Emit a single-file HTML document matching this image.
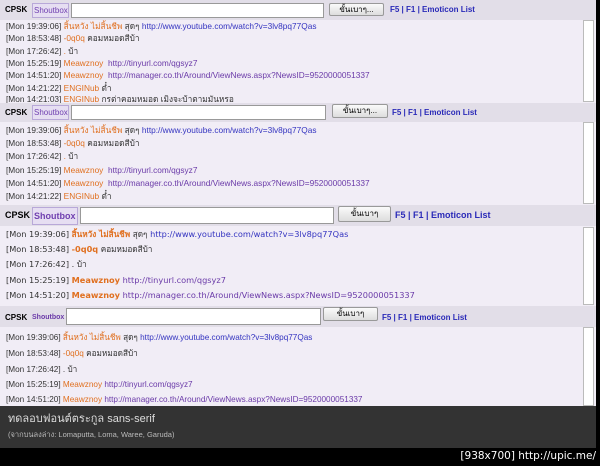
<!DOCTYPE html>
<html><head><meta charset="utf-8"><style>
*{margin:0;padding:0;box-sizing:border-box}
body{width:600px;height:466px;background:#000;position:relative;overflow:hidden;font-family:"Liberation Sans","Noto Sans CJK SC",sans-serif}
.sec{position:absolute;left:0;width:596px;background:#f1edf6}
.hd{position:absolute;left:0;width:596px;background:#e2dee8;font-size:9px;color:#000}
.hd span{position:absolute;white-space:nowrap;line-height:1}
.sb{position:absolute;border:1px solid #b8a8d8;background:#e6def2;color:#7040b0;font-weight:bold}
.in{position:absolute;background:#fff;border:1px solid #999}
.bt{position:absolute;background:linear-gradient(#fafafa,#ddd);border:1px solid #999;border-radius:2px;font-size:8px;text-align:center}
.lk{color:#2a2ab8;font-weight:bold}
.row{position:absolute;left:6px;white-space:nowrap;color:#333;line-height:10px;height:10px}
.n{color:#e07020}
.u{color:#3434c0}
.u2{color:#6a3aa8}
.scr{position:absolute;left:583px;width:11px;background:#fff;border:1px solid #bbb}
</style></head><body>

<!-- section 1 -->
<div class="sec" style="top:20px;height:84px"></div>
<div class="hd" style="top:0;height:20px;font-size:8px">
<span style="left:5px;top:6px;font-weight:bold">CPSK</span>
<span class="sb" style="left:32px;top:3px;height:15px;width:37px;padding:3px 1px;font-weight:normal">Shoutbox</span>
<span class="in" style="left:71px;top:3px;width:253px;height:15px"></span>
<span class="bt" style="left:329px;top:3px;width:55px;height:13px;line-height:11px">ขั้นเบาๆ...</span>
<span class="lk" style="left:390px;top:6px">F5 | F1 | Emoticon List</span>
</div>
<div style="font-size:8.3px">
<div class="row" style="top:21px">[Mon 19:39:06] <span class="n">สิ้นหวัง ไม่สิ้นชีพ</span> สุดๆ <span class="u">http://www.youtube.com/watch?v=3lv8pq77Qas</span></div>
<div class="row" style="top:33px">[Mon 18:53:48] <span class="n">-0q0q</span> คอมหมอดสีบ้า</div>
<div class="row" style="top:46px">[Mon 17:26:42] <span class="n">.</span> บ้า</div>
<div class="row" style="top:58px">[Mon 15:25:19] <span class="n">Meawznoy</span> &nbsp;<span class="u2">http://tinyurl.com/qgsyz7</span></div>
<div class="row" style="top:70px">[Mon 14:51:20] <span class="n">Meawznoy</span> &nbsp;<span class="u2">http://manager.co.th/Around/ViewNews.aspx?NewsID=9520000051337</span></div>
<div class="row" style="top:83px">[Mon 14:21:22] <span class="n">ENGINub</span> ต๋ำ</div>
<div class="row" style="top:94px">[Mon 14:21:03] <span class="n">ENGINub</span> กรต่าคอมหมอด เมิงจะบ้าตามมันหรอ</div>
</div>
<div class="scr" style="top:20px;height:82px"></div>

<!-- section 2 -->
<div class="sec" style="top:121px;height:84px"></div>
<div class="hd" style="top:103px;height:19px;font-size:8px">
<span style="left:5px;top:6px;font-weight:bold">CPSK</span>
<span class="sb" style="left:32px;top:2px;height:15px;width:37px;padding:3px 1px;font-weight:normal">Shoutbox</span>
<span class="in" style="left:71px;top:2px;width:255px;height:15px"></span>
<span class="bt" style="left:332px;top:1px;width:56px;height:14px;line-height:12px">ขั้นเบาๆ...</span>
<span class="lk" style="left:392px;top:6px">F5 | F1 | Emoticon List</span>
</div>
<div style="font-size:8.3px">
<div class="row" style="top:125px">[Mon 19:39:06] <span class="n">สิ้นหวัง ไม่สิ้นชีพ</span> สุดๆ <span class="u">http://www.youtube.com/watch?v=3lv8pq77Qas</span></div>
<div class="row" style="top:138px">[Mon 18:53:48] <span class="n">-0q0q</span> คอมหมอดสีบ้า</div>
<div class="row" style="top:151px">[Mon 17:26:42] <span class="n">.</span> บ้า</div>
<div class="row" style="top:165px">[Mon 15:25:19] <span class="n">Meawznoy</span> &nbsp;<span class="u2">http://tinyurl.com/qgsyz7</span></div>
<div class="row" style="top:178px">[Mon 14:51:20] <span class="n">Meawznoy</span> &nbsp;<span class="u2">http://manager.co.th/Around/ViewNews.aspx?NewsID=9520000051337</span></div>
<div class="row" style="top:191px">[Mon 14:21:22] <span class="n">ENGINub</span> ต๋ำ</div>
</div>
<div class="scr" style="top:122px;height:82px"></div>

<!-- section 3 -->
<div class="sec" style="top:226px;height:80px"></div>
<div class="hd" style="top:205px;height:21px;font-size:9px">
<span style="left:5px;top:6px;font-weight:bold">CPSK</span>
<span class="sb" style="left:32px;top:2px;height:18px;width:46px;padding:4px 1px">Shoutbox</span>
<span class="in" style="left:80px;top:2px;width:254px;height:17px"></span>
<span class="bt" style="left:338px;top:1px;width:53px;height:16px;line-height:14px">ขั้นเบาๆ</span>
<span class="lk" style="left:395px;top:6px">F5 | F1 | Emoticon List</span>
</div>
<div style="font-size:8.2px;font-family:'DejaVu Sans','Noto Sans CJK SC',sans-serif">
<div class="row" style="top:229px">[Mon 19:39:06] <b class="n">สิ้นหวัง ไม่สิ้นชีพ</b> สุดๆ <span class="u">http://www.youtube.com/watch?v=3lv8pq77Qas</span></div>
<div class="row" style="top:244px">[Mon 18:53:48] <b class="n">-0q0q</b> คอมหมอดสีบ้า</div>
<div class="row" style="top:259px">[Mon 17:26:42] . บ้า</div>
<div class="row" style="top:275px">[Mon 15:25:19] <b class="n">Meawznoy</b> <span class="u2">http://tinyurl.com/qgsyz7</span></div>
<div class="row" style="top:290px">[Mon 14:51:20] <b class="n">Meawznoy</b> <span class="u2">http://manager.co.th/Around/ViewNews.aspx?NewsID=9520000051337</span></div>
</div>
<div class="scr" style="top:227px;height:78px"></div>

<!-- section 4 -->
<div class="sec" style="top:326px;height:80px"></div>
<div class="hd" style="top:306px;height:21px;font-size:8px">
<span style="left:5px;top:8px;font-weight:bold">CPSK</span>
<span style="left:32px;top:8px;color:#6a3aa8;font-weight:bold;font-size:7px">Shoutbox</span>
<span class="in" style="left:66px;top:2px;width:255px;height:17px"></span>
<span class="bt" style="left:323px;top:1px;width:55px;height:14px;line-height:12px">ขั้นเบาๆ</span>
<span class="lk" style="left:382px;top:8px">F5 | F1 | Emoticon List</span>
</div>
<div style="font-size:8.2px">
<div class="row" style="top:333px">[Mon 19:39:06] <span class="n">สิ้นหวัง ไม่สิ้นชีพ</span> สุดๆ <span class="u">http://www.youtube.com/watch?v=3lv8pq77Qas</span></div>
<div class="row" style="top:349px">[Mon 18:53:48] <span class="n">-0q0q</span> คอมหมอดสีบ้า</div>
<div class="row" style="top:365px">[Mon 17:26:42] . บ้า</div>
<div class="row" style="top:380px">[Mon 15:25:19] <span class="n">Meawznoy</span> <span class="u2">http://tinyurl.com/qgsyz7</span></div>
<div class="row" style="top:395px">[Mon 14:51:20] <span class="n">Meawznoy</span> <span class="u2">http://manager.co.th/Around/ViewNews.aspx?NewsID=9520000051337</span></div>
</div>
<div class="scr" style="top:327px;height:79px"></div>

<!-- caption -->
<div style="position:absolute;top:406px;left:0;width:596px;height:42px;background:#333"></div>
<div style="position:absolute;top:412px;left:8px;color:#ddd;font-size:11px;line-height:14px">ทดลอบฟอนต์ตระกูล sans-serif</div>
<div style="position:absolute;top:430px;left:8px;color:#bbb;font-size:7.5px;line-height:10px">(จากบนลงล่าง: Lomaputta, Loma, Waree, Garuda)</div>
<div style="position:absolute;top:450px;right:4px;color:#fff;font-size:10.5px;line-height:13px;font-family:'DejaVu Sans',sans-serif">[938x700] http://upic.me/</div>
</body></html>
